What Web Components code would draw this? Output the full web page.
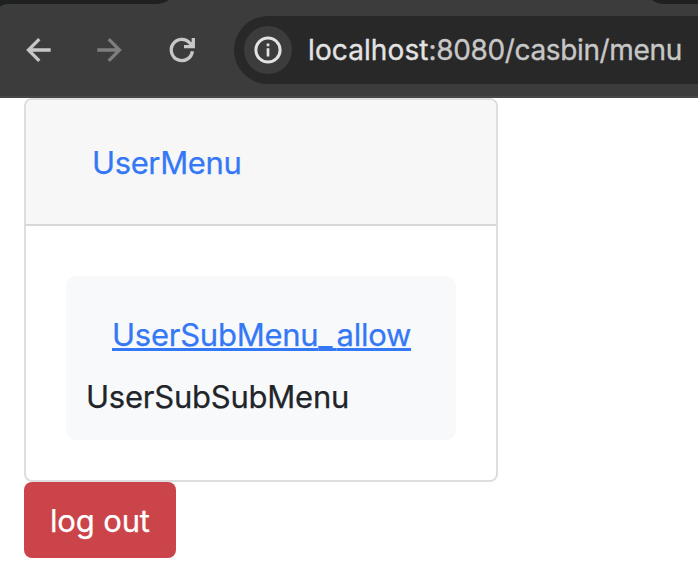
<!DOCTYPE html>
<html lang="en"><head><meta charset="utf-8"><title>Menu</title>
<style>
html,body{margin:0;height:100%;overflow:hidden;background:#fff;font-family:Inter,"Liberation Sans",sans-serif;color:#212529}
</style></head><body>
<app-page></app-page>
<script>
function define(name, html){
  const t=document.createElement('template');t.innerHTML=html;
  customElements.define(name,class extends HTMLElement{
    constructor(){super();this.attachShadow({mode:'open'}).append(t.content.cloneNode(true));}
  });
}
define('address-bar',`<style>
:host{display:flex;align-items:center;box-sizing:border-box;flex:none;width:500px;height:68px;border-radius:34px;background:#282828;padding-left:10px;white-space:nowrap;font-size:28px;line-height:40px;color:#c7c7c7;letter-spacing:-.36px;-webkit-text-stroke:.35px currentColor}
.info{display:flex;width:48px;height:48px;border-radius:50%;background:#3c3c3c;margin-right:16px;flex:none}
b{font-weight:400;color:#e3e3e3;letter-spacing:.1px;-webkit-text-stroke:.35px #e3e3e3}
</style><span class="info"><svg width="48" height="48" viewBox="0 0 48 48" fill="none" stroke="#e3e3e3"><circle cx="24" cy="24" r="12.1" stroke-width="3"/><path d="M24 22.3v8.2M24 17.6v2.6" stroke-width="2.7"/></svg></span><span><b><slot name="host"></slot></b><slot></slot></span>`);
define('browser-toolbar',`<style>
:host{display:flex;position:relative;box-sizing:border-box;height:98px;background:#3c3c3c;border-bottom:2px solid #474747;padding-top:16px;overflow:hidden}
.edge{position:absolute;left:0;top:0}
.nav{flex:none;width:234px;height:68px}
</style>
<svg class="edge" width="698" height="8" fill="#1f2120"><path d="M0 0H169Q163 4 155 4H8Q3 4 0 7ZM652 0H698V4H664Q657 4 652 0Z"/></svg>
<svg class="nav" viewBox="0 16 234 68" fill="none" stroke-width="3.3">
<path stroke="#c7c7c7" d="M50.7 50H28.5M39.3 39.2L28.5 50L39.3 60.8"/>
<path stroke="#7e7e7e" d="M97.3 50H119.5M108.7 39.2L119.5 50L108.7 60.8"/>
<path stroke="#c7c7c7" d="M192.4 51.2A10.6 10.6 0 1 1 189.7 42.8L192.8 46M193.3 38V46.7H184"/>
</svg>
<address-bar><span slot="host">localhost</span>:8080/casbin/menu</address-bar>`);
define('menu-link',`<style>:host{display:block;color:#3478f6;font-size:31px;line-height:48px;white-space:nowrap;-webkit-text-stroke:.25px #3478f6}
a{color:inherit;text-decoration:none}:host([underlined]) a{text-decoration:underline;text-decoration-thickness:3px;text-underline-offset:2px;text-decoration-skip-ink:none}</style><a><slot></slot></a>`);
define('sub-menu',`<style>:host{display:block;box-sizing:border-box;width:390px;height:164px;border-radius:10px;background:#f8f9fb;padding:35px 20px 0;font-size:31px;line-height:48px;white-space:nowrap}
.link{padding-left:26px;margin-bottom:14px}</style><div class="link"><slot name="link"></slot></div><slot></slot>`);
define('menu-card',`<style>:host{display:block;box-sizing:border-box;width:474px;height:384px;border:2px solid #dedede;border-radius:8px;overflow:hidden;background:#fff}
header{box-sizing:border-box;height:126px;padding:39px 0 0 66px;background:#f7f7f7;border-bottom:2px solid #d8d8d8}
section{padding:50px 40px}</style><header><slot name="title"></slot></header><section><slot></slot></section>`);
define('danger-button',`<style>:host{display:block}button{display:block;box-sizing:border-box;width:152px;height:76px;border:0;border-radius:8px;background:#cb444a;color:#fff;font:31px/48px Inter,"Liberation Sans",sans-serif;letter-spacing:inherit;-webkit-text-stroke:.25px #fff;text-align:left;padding:1px 0 0 26px;white-space:nowrap}</style><button><slot></slot></button>`);
define('app-page',`<style>:host{display:block}main{padding-left:24px}
.a{letter-spacing:-.38px}.b{letter-spacing:-.25px}.gap{letter-spacing:4px}.c{letter-spacing:-.23px;-webkit-text-stroke:.25px #212529}.d{letter-spacing:-.15px}</style>
<browser-toolbar></browser-toolbar>
<main><menu-card><menu-link class="a" slot="title">UserMenu</menu-link>
<sub-menu><menu-link class="b" slot="link" underlined>UserSubMenu<span class="gap">_</span>allow</menu-link><span class="c">UserSubSubMenu</span></sub-menu></menu-card>
<danger-button class="d">log out</danger-button></main>`);
</script></body></html>
